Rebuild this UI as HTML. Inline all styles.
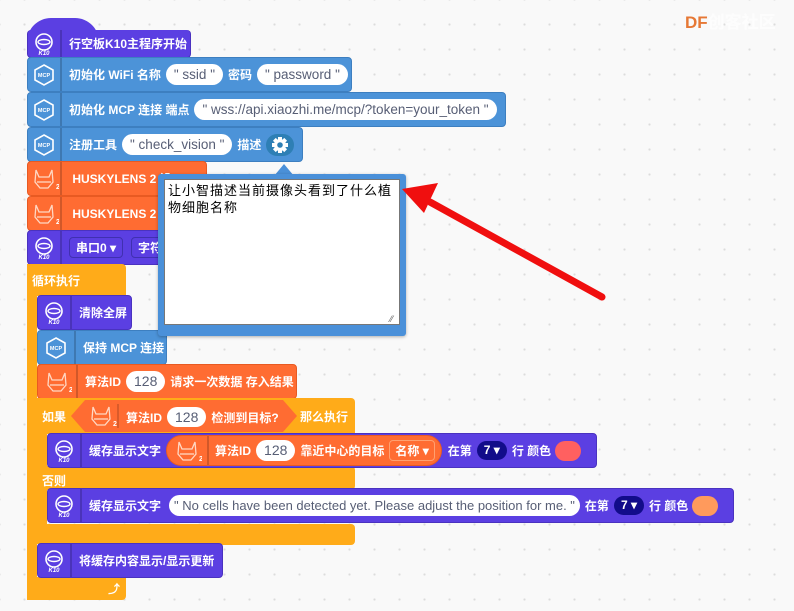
<!DOCTYPE html>
<html><head><meta charset="utf-8"><style>
*{margin:0;padding:0;box-sizing:border-box}
body{width:794px;height:611px;overflow:hidden;position:relative;background:#f9f9f9;
background-image:radial-gradient(#dcdcdc 1px,transparent 1.2px);background-size:25px 25px;background-position:12px 12px;
font-family:"Liberation Sans","Noto Sans CJK SC",sans-serif;font-weight:bold;font-size:12px;color:#fff}
.b{position:absolute;height:35px;border-radius:4px;display:flex;align-items:center;white-space:nowrap}
.p{background:#5b3fe2;border:1px solid #4a32c0}
.bl{background:#4c93d8;border:1px solid #3d7fc0}
.o{background:#ff6c32;border:1px solid #e85a22}
.y{background:#ffab19}
.ic{width:34px;height:100%;display:flex;align-items:center;justify-content:center;border-right:2px solid rgba(0,0,0,.18);margin-right:7px;flex:none}
.f{background:#fff;color:#575e75;border-radius:12px;padding:2px 8px;font-weight:normal;margin:0 5px;font-size:13.5px;line-height:17px}
.dd{background:#120c8a;color:#fff;border-radius:10px;padding:1px 7px;margin:0 5px;line-height:17px}
.sw{width:26px;height:20px;border-radius:10px;margin:0 4px;flex:none}
.t{position:absolute;color:#fff}
</style></head><body>
<svg width="0" height="0" style="position:absolute"><defs>
<g id="k10"><circle cx="0" cy="-2" r="8" fill="none" stroke="#fff" stroke-width="1.6"/><ellipse cx="0" cy="-2" rx="6" ry="2.5" fill="none" stroke="#fff" stroke-width="1.4"/><text x="0" y="11" font-size="6" fill="#fff" text-anchor="middle" font-style="italic" font-family="Liberation Sans">K10</text></g>
<g id="mcp"><polygon points="0,-10 9,-5 9,5 0,10 -9,5 -9,-5" fill="none" stroke="#fff" stroke-width="1.6"/><text x="0" y="2" font-size="5.5" fill="#fff" text-anchor="middle" font-family="Liberation Sans">MCP</text></g>
<g id="hl"><path d="M-8,-9 L-5,-2 L5,-2 L8,-9 L9,3 L4,9 L-4,9 L-9,3Z" fill="none" stroke="#ffd8c4" stroke-width="1.3"/><path d="M-7,3 H7" stroke="#ffd8c4" stroke-width="1.3"/><text x="12" y="10" font-size="7" fill="#fff" font-family="Liberation Sans">2</text></g>
</defs></svg>

<div style="position:absolute;left:27px;top:18px;width:72px;height:24px;background:#5b3fe2;border-radius:36px 36px 0 0"></div>
<div class="b p" style="left:27px;top:30px;width:164px;height:28px;border-top:none"><div class="ic"><svg width="30" height="30" viewBox="-15 -15 30 30"><use href="#k10"/></svg></div>行空板K10主程序开始</div>

<div class="b bl" style="left:27px;top:57px;width:325px"><div class="ic"><svg width="30" height="30" viewBox="-15 -15 30 30"><use href="#mcp"/></svg></div>初始化 WiFi 名称<span class="f">" ssid "</span>密码<span class="f">" password "</span></div>
<div class="b bl" style="left:27px;top:92px;width:479px"><div class="ic"><svg width="30" height="30" viewBox="-15 -15 30 30"><use href="#mcp"/></svg></div>初始化 MCP 连接 端点<span class="f">" wss://api.xiaozhi.me/mcp/?token=your_token "</span></div>
<div class="b bl" style="left:27px;top:127px;width:276px"><div class="ic"><svg width="30" height="30" viewBox="-15 -15 30 30"><use href="#mcp"/></svg></div>注册工具<span class="f">" check_vision "</span>描述<svg style="margin-left:5px" width="28" height="22" viewBox="0 0 28 22"><rect width="28" height="22" rx="11" fill="#2e7fb5"/><g fill="#fff" transform="translate(14,11)"><circle r="6"/><rect x="-2" y="-8" width="4" height="16"/><rect x="-8" y="-2" width="16" height="4"/><rect x="-2" y="-8" width="4" height="16" transform="rotate(45)"/><rect x="-2" y="-8" width="4" height="16" transform="rotate(-45)"/></g><circle cx="14" cy="11" r="2.8" fill="#2e7fb5"/></svg></div>
<div class="b o" style="left:27px;top:161px;width:180px"><div class="ic"><svg width="30" height="30" viewBox="-15 -15 30 30"><use href="#hl"/></svg></div>&nbsp;HUSKYLENS 2 设</div>
<div class="b o" style="left:27px;top:196px;width:180px"><div class="ic"><svg width="30" height="30" viewBox="-15 -15 30 30"><use href="#hl"/></svg></div>&nbsp;HUSKYLENS 2 切</div>
<div class="b p" style="left:27px;top:230px;width:180px"><div class="ic"><svg width="30" height="30" viewBox="-15 -15 30 30"><use href="#k10"/></svg></div><span style="border:1px solid #4030b0;border-radius:4px;padding:1px 6px">串口0 ▾</span><span style="border:1px solid #4030b0;border-radius:4px;padding:1px 6px;margin-left:8px">字符</span></div>

<div class="y" style="position:absolute;left:27px;top:264px;width:99px;height:32px;border-radius:0 4px 0 0"></div>
<div class="y" style="position:absolute;left:27px;top:264px;width:10px;height:336px"></div>
<div class="y" style="position:absolute;left:27px;top:577px;width:99px;height:23px;border-radius:0 0 4px 4px"></div>
<div class="t" style="left:32px;top:272px">循环执行</div>
<div class="t" style="left:108px;top:580px">⤴</div>

<div class="b p" style="left:37px;top:295px;width:95px"><div class="ic"><svg width="30" height="30" viewBox="-15 -15 30 30"><use href="#k10"/></svg></div>清除全屏</div>
<div class="b bl" style="left:37px;top:330px;width:130px"><div class="ic" style="width:38px"><svg width="30" height="30" viewBox="-15 -15 30 30"><use href="#mcp"/></svg></div>保持 MCP 连接</div>
<div class="b o" style="left:37px;top:364px;width:260px"><div class="ic" style="width:40px"><svg width="30" height="30" viewBox="-15 -15 30 30"><use href="#hl"/></svg></div>算法ID<span class="f" style="font-size:14px">128</span>请求一次数据 存入结果</div>

<div class="y" style="position:absolute;left:37px;top:398px;width:318px;height:36px;border-radius:0 4px 0 0"></div>
<div class="y" style="position:absolute;left:37px;top:398px;width:10px;height:146px"></div>
<div class="y" style="position:absolute;left:37px;top:466px;width:318px;height:24px;border-radius:0 4px 4px 0"></div>
<div class="y" style="position:absolute;left:37px;top:524px;width:318px;height:21px;border-radius:0 4px 4px 4px"></div>
<div class="t" style="left:42px;top:408px">如果</div>
<div class="t" style="left:42px;top:472px">否则</div>
<svg style="position:absolute;left:71px;top:400px" width="226" height="32"><polygon points="14,0 212,0 226,16 212,32 14,32 0,16" fill="#ff6c32"/><g transform="translate(30,16)"><use href="#hl"/></g><line x1="47" y1="4" x2="47" y2="28" stroke="rgba(0,0,0,.15)" stroke-width="2"/></svg>
<div class="t" style="left:126px;top:407px;display:flex;align-items:center">算法ID<span class="f" style="font-size:14px;line-height:16px">128</span>检测到目标?</div>
<div class="t" style="left:300px;top:408px">那么执行</div>

<div class="b p" style="left:47px;top:433px;width:550px"><div class="ic"><svg width="30" height="30" viewBox="-15 -15 30 30"><use href="#k10"/></svg></div>缓存显示文字
<span style="display:flex;align-items:center;background:#ff6c32;border:1px solid #e85a22;border-radius:16px;height:31px;margin-left:5px;padding-right:6px"><span class="ic" style="width:42px;margin-right:6px"><svg width="30" height="30" viewBox="-15 -15 30 30"><use href="#hl"/></svg></span>算法ID<span class="f" style="font-size:14px">128</span>靠近中心的目标<span style="border:1px solid #ffa070;border-radius:4px;padding:1px 5px;margin-left:5px">名称 ▾</span></span>
<span style="margin-left:6px">在第</span><span class="dd">7 ▾</span>行 颜色<span class="sw" style="background:#ff6060"></span></div>
<div class="b p" style="left:47px;top:488px;width:687px"><div class="ic"><svg width="30" height="30" viewBox="-15 -15 30 30"><use href="#k10"/></svg></div>缓存显示文字<span class="f" style="margin-left:8px;padding:2px 5px;font-size:13px">" No cells have been detected yet. Please adjust the position for me. "</span>在第<span class="dd">7 ▾</span>行 颜色<span class="sw" style="background:#ff9a5c"></span></div>
<div class="b p" style="left:37px;top:543px;width:186px"><div class="ic"><svg width="30" height="30" viewBox="-15 -15 30 30"><use href="#k10"/></svg></div>将缓存内容显示/显示更新</div>

<svg style="position:absolute;left:270px;top:163px" width="30" height="14"><polygon points="14,1 4,13 24,13" fill="#4a90d9"/></svg>
<div style="position:absolute;left:158px;top:174px;width:248px;height:162px;background:#4a90d9;border-radius:3px;box-shadow:0 1px 3px rgba(0,0,0,.3)"></div>
<div style="position:absolute;left:164px;top:179px;width:236px;height:146px;background:#fff;border:1px solid #777;color:#000;font-weight:normal;font-size:13px;line-height:17px;padding:2px 3px;letter-spacing:1px">让小智描述当前摄像头看到了什么植物细胞名称</div>
<div style="position:absolute;left:390px;top:314px;color:#666;font-size:9px;font-weight:normal">⁄⁄</div>

<svg style="position:absolute;left:0;top:0" width="794" height="611"><line x1="602" y1="297" x2="430" y2="202" stroke="#f00f0f" stroke-width="7" stroke-linecap="round"/><polygon points="402,189 438,183 424,213" fill="#f00f0f"/></svg>

<div style="position:absolute;left:685px;top:8px;font-size:17px;color:#e67835;font-family:'Liberation Sans',sans-serif">DF<span style="color:#fff;opacity:.8;font-family:'Noto Sans CJK SC',sans-serif">创客社区</span></div>
</body></html>
